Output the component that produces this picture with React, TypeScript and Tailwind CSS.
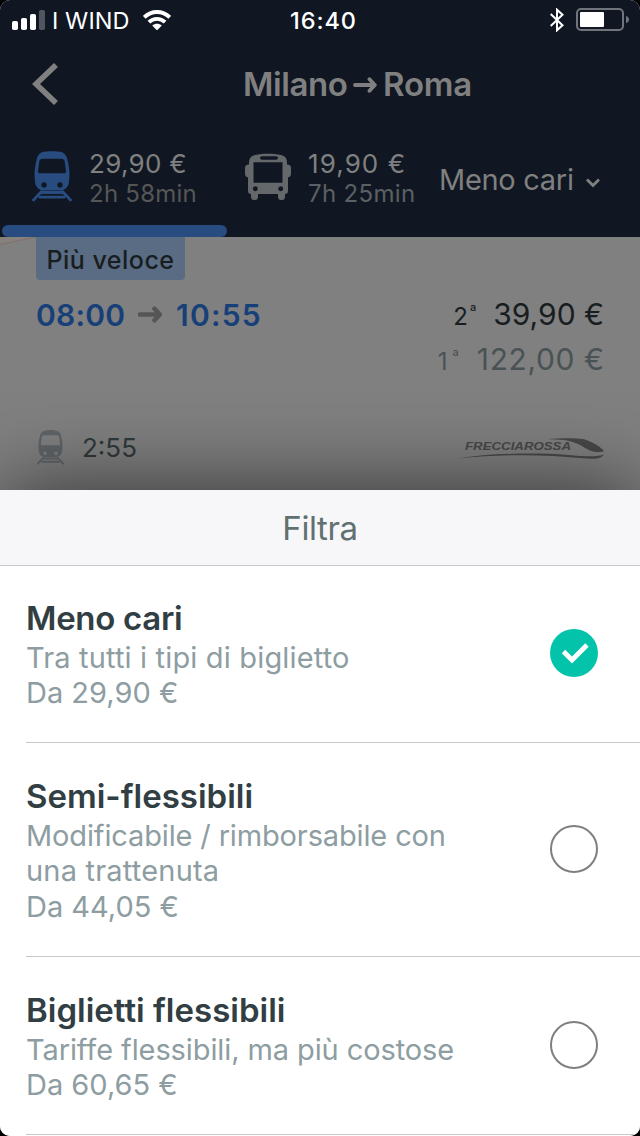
import type { ReactNode } from "react";

function TrainIcon({ className }: { className: string }) {
  return (
    <svg viewBox="0 0 40 51" className={className} fill="none">
      <path
        fill="currentColor"
        fillRule="evenodd"
        d="M14 .6C16 0 24 0 26 .6C32 1.200 34.500 4 35.500 9C37.500 16 38 24 37 31C36.500 36 33.500 38.500 29 39.500H11C6.500 38.500 3.500 36 3 31C2 24 2.500 16 4.500 9C5.500 4 8 1.200 14 .6ZM11 7.800C8.500 7.800 7.600 8.800 7.200 11L6 20.500Q5.900 22.200 7.200 22.200H32.800Q34.100 22.200 34 20.500L32.800 11C32.400 8.800 31.500 7.800 29 7.800ZM12 31.200a2.700 2.700 0 1 0 .01 5.400a2.700 2.700 0 1 0 -.01 -5.400ZM28 31.200a2.700 2.700 0 1 0 .01 5.400a2.700 2.700 0 1 0 -.01 -5.400Z"
      />
      <path stroke="currentColor" strokeWidth="2.800" strokeLinecap="round" d="M9.500 40.500L1.500 49M30.500 40.500L38.500 49M8 46.200H32M10 41.500H30" />
    </svg>
  );
}

function BusIcon() {
  return (
    <svg viewBox="0 0 46 47" className="h-[47px] w-[46px] shrink-0 text-[#64686b]" fill="none">
      <path
        fill="currentColor"
        fillRule="evenodd"
        d="M4 10C4 5 6 3 10 2C18 .3 28 .3 36 2C40 3 42 5 42 10V11.500C45 11.500 46 13 46 15V20C46 23 45 24.300 43 24.300V38Q43 41 40 41V43.500Q40 47 37 47H36Q33 47 33 43.500V41H13V43.500Q13 47 10 47H9Q6 47 6 43.500V41Q3 41 3 38V24.300C1 24.300 0 23 0 20V15C0 13 1 11.500 4 11.500ZM17 3.200Q15 3.200 15 5Q15 6.800 17 6.800H31Q33 6.800 33 5Q33 3.200 31 3.200ZM8.500 9.300V29.800H37.500V9.300ZM10.300 33.300a2.500 2.500 0 1 0 .01 5a2.500 2.500 0 1 0 -.01 -5ZM35.700 33.300a2.500 2.500 0 1 0 .01 5a2.500 2.500 0 1 0 -.01 -5Z"
      />
    </svg>
  );
}

function StatusBar() {
  return (
    <div className="flex h-10 items-center text-[23.500px] leading-10 text-white">
      <div className="flex w-[240px] items-center pl-3">
        <svg viewBox="0 0 33 20" className="h-5 w-[33px]" fill="currentColor">
          <rect x="0" y="11" width="6" height="9" rx="1.800" />
          <rect x="9" y="8" width="6" height="12" rx="1.800" />
          <rect x="18" y="4" width="6" height="16" rx="1.800" />
          <rect x="27" y="0" width="6" height="20" rx="1.800" opacity=".27" />
        </svg>
        <span className="ml-[7px] w-[91px] pt-px tracking-[0.1px] whitespace-nowrap">I WIND</span>
        <svg viewBox="0 0 28 20" className="h-5 w-7" fill="none" stroke="currentColor" strokeWidth="3.900">
          <path d="M1.300 7.300C8.500 .2 19.500 .2 26.700 7.300" />
          <path d="M5.900 12.200C10.500 7.800 17.500 7.800 22.100 12.200" />
          <path stroke="none" fill="currentColor" d="M9.200 15.600C12 13 16 13 18.800 15.600L14 20.400Z" />
        </svg>
      </div>
      <div className="w-[167px] pt-px text-center font-medium tracking-[0.900px]">16:40</div>
      <div className="flex flex-1 items-center justify-end pr-[11px]">
        <svg viewBox="0 0 14 24" className="mr-3 h-6 w-[14px]" fill="none" stroke="currentColor" strokeWidth="2">
          <path d="M.7 6L12.500 17.200L7 22.300V1.700L12.500 6.800L.7 18" />
        </svg>
        <svg viewBox="0 0 53 24" className="h-6 w-[53px]" fill="none">
          <rect x="1" y="1" width="46" height="21" rx="4" stroke="#71757b" strokeWidth="2" />
          <rect x="4" y="4" width="24" height="15" rx="1" fill="white" />
          <path d="M50 8Q53 9 53 11.500Q53 14 50 15Z" fill="#71757b" />
        </svg>
      </div>
    </div>
  );
}

function Arrow({ className }: { className: string }) {
  return (
    <svg viewBox="0 0 24 18" className={className} fill="none" stroke="currentColor" strokeLinecap="round" strokeLinejoin="round">
      <path d="M2 9H21M16.500 3.200L21.800 9L16.500 14.800" />
    </svg>
  );
}

function Header() {
  return (
    <header className="flex h-[237px] flex-col bg-[#101723]">
      <StatusBar />
      <div className="flex h-[88px] items-center pl-8 text-[#808080]">
        <svg viewBox="0 0 26 42" className="-mt-px h-[42px] w-[26px]" fill="none" stroke="currentColor" strokeWidth="5.600">
          <path d="M24 2L4 21L24 40" />
        </svg>
        <h1 className="ml-[185px] flex items-center pt-px text-[33px] font-semibold tracking-[-0.400px] whitespace-nowrap">
          <span className="w-[110px]">Milano</span>
          <Arrow className="h-[18px] w-6 stroke-[3.800]" />
          <span className="ml-[6px] tracking-[-0.200px]">Roma</span>
        </h1>
      </div>
      <div className="flex h-[97px] items-center pl-8">
        <TrainIcon className="h-[51px] w-10 shrink-0 text-[#284c80]" />
        <div className="ml-[17px] w-[156px] pt-[3px] whitespace-nowrap">
          <div className="text-[26px] leading-[31px] tracking-[0.300px] text-[#808080]">29,90 €</div>
          <div className="text-[24px] leading-[30px] tracking-[0.250px] text-[#565656]">2h 58min</div>
        </div>
        <BusIcon />
        <div className="ml-[17px] w-[131px] pt-[3px] whitespace-nowrap">
          <div className="text-[26px] leading-[31px] tracking-[1.100px] text-[#808080]">19,90 €</div>
          <div className="text-[24px] leading-[30px] tracking-[0.350px] text-[#5c6062]">7h 25min</div>
        </div>
        <div className="w-[147px] pt-[6px] text-[29px] tracking-[-0.300px] whitespace-nowrap text-[#808080]">Meno cari</div>
        <svg viewBox="0 0 14 10" className="mt-3 h-[10px] w-[14px]" fill="none" stroke="#808080" strokeWidth="2.800">
          <path d="M1 1.500L7 7.500L13 1.500" />
        </svg>
      </div>
      <div className="ml-[2px] h-3 w-[225px] rounded-full bg-[#284c80]" />
    </header>
  );
}

function Frecciarossa() {
  return (
    <svg viewBox="0 0 148 22" className="mt-[3px] -mr-[2px] h-[22px] w-[148px] overflow-visible" fill="#484848">
      <text x="7" y="12" fontFamily="Liberation Sans" fontWeight="700" fontStyle="italic" fontSize="10" textLength="106" lengthAdjust="spacingAndGlyphs">
        FRECCIAROSSA
      </text>
      <path d="M89 1C104 -.2 118 0 126 1.300C134 3.500 142 8.500 146 13C143 14.500 137 14.500 132 12.500C124 8.500 118 3.500 106 2Z" />
      <path d="M-1 20.500C34 15 78 14.500 110 17C127 18.500 140 19 146 16.500C143 20.500 138 21.500 129 20.500C82 16 45 16 -1 20.500Z" />
    </svg>
  );
}

function Ticket() {
  return (
    <section className="relative h-[253px] bg-[#808080] px-9">
      <svg viewBox="0 0 36 8" className="absolute top-0 left-0 h-2 w-9" fill="none">
        <path d="M0 0H34L0 7.500Z" fill="#85817c" />
        <path d="M0 7.500L35 .3" stroke="#826f68" />
      </svg>
      <div className="flex h-[43px] w-[149px] items-center justify-center rounded-b-[4px] bg-[#5a6b84] pt-1 text-[25px] font-medium tracking-[0.500px] whitespace-nowrap text-[#181e20]">
        Più veloce
      </div>
      <div className="flex h-[70px] justify-between pt-[12px] text-[30px] leading-[44px]">
        <div className="flex items-center self-start pt-px font-semibold text-[#173f78]">
          <span className="w-[102px] tracking-[0.200px]">08:00</span>
          <Arrow className="-mt-px h-[19px] w-6 stroke-[4.600] text-[#555]" />
          <span className="ml-[14px] tracking-[1.200px]">10:55</span>
        </div>
        <div className="text-right whitespace-nowrap">
          <div className="flex items-baseline justify-end text-[#181e20]">
            <span className="text-[24px]">2</span>
            <sup className="-top-[14px] mr-[17px] ml-[2px] text-[11px] leading-none font-medium">a</sup>
            <span>39,90 €</span>
          </div>
          <div className="flex h-[44px] items-baseline justify-end leading-[40px] text-[#495254]">
            <span className="text-[24px]">1</span>
            <sup className="-top-[14px] mr-[18px] ml-[5px] text-[11px] leading-none font-medium">a</sup>
            <span className="-mr-[0.600px] tracking-[0.600px]">122,00 €</span>
          </div>
        </div>
      </div>
      <div className="mt-[75px] flex h-[44px] items-center">
        <TrainIcon className="mt-px h-[35px] w-[29px] text-[#5f6468]" />
        <span className="ml-[17px] flex-1 text-[26px] text-[#30393b]">2:55</span>
        <Frecciarossa />
      </div>
    </section>
  );
}

function Option({ title, children, selected, className, titleClassName }: { title: string; children: ReactNode; selected?: boolean; className: string; titleClassName?: string }) {
  return (
    <div className={`ml-[26px] flex items-center justify-between border-b border-[#c8c7cc] pr-[42px] ${className}`}>
      <div className="text-[29px] leading-[35.500px] whitespace-nowrap text-[#8d9da1]">
        <h2 className={`text-[33px] leading-[42px] font-semibold text-[#313e43] ${titleClassName ?? ""}`}>{title}</h2>
        {children}
      </div>
      {selected ? (
        <svg viewBox="0 0 48 48" className="-mt-[3px] h-12 w-12" fill="none">
          <circle cx="24" cy="24" r="24" fill="#03c4aa" />
          <path d="M13.500 22.500L22 31L37 16" stroke="white" strokeWidth="4.800" />
        </svg>
      ) : (
        <span className="-mt-[2px] h-12 w-12 rounded-full border-2 border-[#7f7f7f]" />
      )}
    </div>
  );
}

export default function App() {
  return (
    <main className="h-[1136px] w-[640px] overflow-hidden bg-black font-['Inter',sans-serif]">
      <div className="h-full overflow-hidden rounded-[10px] bg-white">
        <Header />
        <Ticket />
        <section className="relative h-[646px] bg-white shadow-[0_0_80px_rgba(0,0,0,0.62)] [clip-path:inset(-100px_0_0_0)]">
          <div className="flex h-[76px] items-center justify-center border-b border-[#c8c7cc] bg-[#f7f7fa] pt-[2px] text-[33px] tracking-[-0.400px] text-[#617070]">Filtra</div>
          <Option title="Meno cari" selected className="h-[177px]" titleClassName="-mt-px mb-px tracking-[-0.300px]">
            <p className="tracking-[0.160px]">Tra tutti i tipi di biglietto</p>
            <p>Da 29,90 €</p>
          </Option>
          <Option title="Semi-flessibili" className="h-[214px]" titleClassName="mb-px">
            <p className="tracking-[-0.140px]">Modificabile / rimborsabile con</p>
            <p className="tracking-[0.200px]">una trattenuta</p>
            <p>Da 44,05 €</p>
          </Option>
          <Option title="Biglietti flessibili" className="h-[178px]" titleClassName="mb-px">
            <p className="tracking-[-0.100px]">Tariffe flessibili, ma più costose</p>
            <p>Da 60,65 €</p>
          </Option>
        </section>
      </div>
    </main>
  );
}
